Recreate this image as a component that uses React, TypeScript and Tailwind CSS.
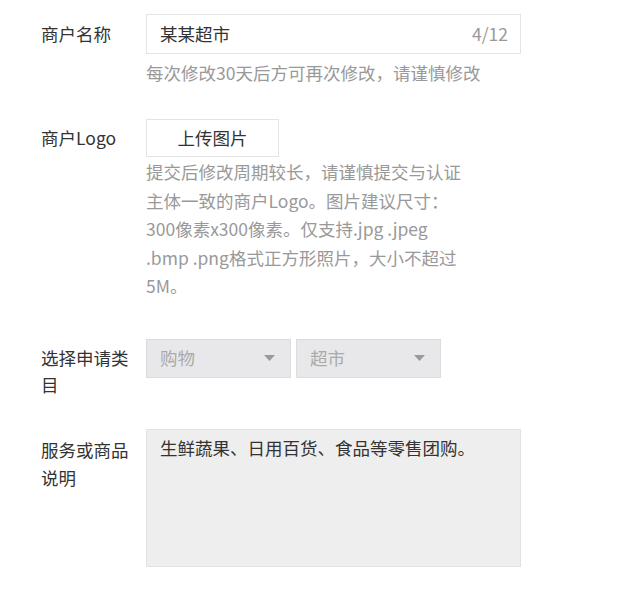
const FONT = "font-['Noto_Sans_CJK_SC','Noto_Sans',sans-serif]";

const Arrow = () => (
  <svg width="11" height="6" viewBox="0 0 11 6" className="shrink-0">
    <path d="M0 0 L11 0 L5.5 6 Z" fill="#9a9a9a" />
  </svg>
);

const App = () => {
  const logoHint = [
    "提交后修改周期较长，请谨慎提交与认证",
    "主体一致的商户Logo。图片建议尺寸：",
    "300像素x300像素。仅支持.jpg .jpeg",
    ".bmp .png格式正方形照片，大小不超过",
    "5M。",
  ];

  return (
    <div className={`${FONT} min-h-[591px] w-[630px] bg-white pl-[41px] pt-[14px] text-[17.5px] text-[#333]`}>
      {/* 商户名称 */}
      <div className="flex">
        <div className="w-[105px] shrink-0 pt-[6px] leading-[28px]">商户名称</div>
        <div>
          <div className="flex h-[40px] w-[375px] items-center justify-between border border-[#e4e4e4] pl-[13px] pr-[12px]">
            <span>某某超市</span>
            <span className="text-[#999]">4/12</span>
          </div>
          <div className="mt-[5px] leading-[28px] text-[#999]">每次修改30天后方可再次修改，请谨慎修改</div>
        </div>
      </div>

      {/* 商户Logo */}
      <div className="mt-[32px] flex">
        <div className="w-[105px] shrink-0 pt-[5px] leading-[28px]">商户Logo</div>
        <div>
          <button className="flex h-[38px] w-[133px] items-center justify-center border border-[#e4e4e4] bg-white">
            上传图片
          </button>
          <div className="mt-[1px] leading-[28.5px] text-[#999]">
            {logoHint.map((line) => (
              <div key={line} className="whitespace-nowrap">{line}</div>
            ))}
          </div>
        </div>
      </div>

      {/* 选择申请类目 */}
      <div className="mt-[38px] flex">
        <div className="w-[105px] shrink-0 pr-[14px] pt-[5px] leading-[27.5px]">选择申请类目</div>
        <div className="flex gap-[5px]">
          {["购物", "超市"].map((v) => (
            <div
              key={v}
              className="flex h-[39px] w-[145px] items-center justify-between border border-[#dcdcde] bg-[#e8e8ea] pl-[13px] pr-[15px] text-[#aaa]"
            >
              <span>{v}</span>
              <Arrow />
            </div>
          ))}
        </div>
      </div>

      {/* 服务或商品说明 */}
      <div className="mt-[30px] flex">
        <div className="w-[105px] shrink-0 pr-[14px] pt-[7px] leading-[28px]">服务或商品说明</div>
        <div className="h-[138px] w-[375px] border border-[#e2e2e2] bg-[#eeeeee] pl-[13px] pt-[4px] leading-[28px]">
          生鲜蔬果、日用百货、食品等零售团购。
        </div>
      </div>
    </div>
  );
};

export default App;
